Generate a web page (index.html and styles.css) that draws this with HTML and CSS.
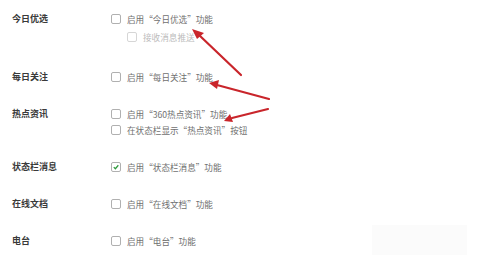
FILE: index.html
```html
<!DOCTYPE html>
<html lang="zh">
<head>
<meta charset="utf-8">
<link rel="stylesheet" href="styles.css">
</head>
<body>
<div class="page">
  <div class="row">
    <div class="label">今日优选</div>
    <div class="opts">
      <div class="opt"><span class="cb"></span><span>启用“今日优选”功能</span></div>
      <div class="opt sub disabled"><span class="cb"></span><span>接收消息推送</span></div>
    </div>
  </div>
  <div class="row">
    <div class="label">每日关注</div>
    <div class="opts">
      <div class="opt"><span class="cb"></span><span>启用“每日关注”功能</span></div>
    </div>
  </div>
  <div class="row">
    <div class="label">热点资讯</div>
    <div class="opts">
      <div class="opt"><span class="cb"></span><span>启用“360热点资讯”功能</span></div>
      <div class="opt"><span class="cb"></span><span>在状态栏显示“热点资讯”按钮</span></div>
    </div>
  </div>
  <div class="row">
    <div class="label">状态栏消息</div>
    <div class="opts">
      <div class="opt"><span class="cb checked"><svg viewBox="0 0 10 10" width="10" height="10"><path d="M2.2 5.2 L4.2 7.2 L7.9 2.8" fill="none" stroke="#2e9a3c" stroke-width="1.5"/></svg></span><span>启用“状态栏消息”功能</span></div>
    </div>
  </div>
  <div class="row">
    <div class="label">在线文档</div>
    <div class="opts">
      <div class="opt"><span class="cb"></span><span>启用“在线文档”功能</span></div>
    </div>
  </div>
  <div class="row">
    <div class="label">电台</div>
    <div class="opts">
      <div class="opt"><span class="cb"></span><span>启用“电台”功能</span></div>
    </div>
  </div>
  <div class="watermark"></div>
  <svg class="arrows" width="479" height="275" viewBox="0 0 479 275">
    <g stroke="#c9252b" stroke-width="2.2" stroke-linecap="round" fill="#c9252b">
      <line x1="241" y1="75" x2="199" y2="35"/>
      <polygon points="192,29 204,33 197,39" stroke="none"/>
      <line x1="269" y1="99" x2="217" y2="85"/>
      <polygon points="209,83 219,80 217,89" stroke="none"/>
      <line x1="268" y1="109" x2="232" y2="118"/>
      <polygon points="224,121 230,114 233,122" stroke="none"/>
    </g>
  </svg>
</div>
</body>
</html>
```
FILE: styles.css
```css
html, body {
  margin: 0;
  padding: 0;
  background: #ffffff;
}
.page {
  position: relative;
  width: 479px;
  height: 275px;
  overflow: hidden;
  padding: 11px 0 0 12px;
  box-sizing: border-box;
  font-family: "Noto Sans CJK SC", "Liberation Sans", sans-serif;
  font-size: 8.6px;
}
.row {
  display: flex;
  margin-bottom: 21px;
}
.row:first-child {
  margin-bottom: 24px;
}
.label {
  width: 99px;
  flex: none;
  line-height: 16px;
  font-weight: bold;
  color: #3a3a3a;
  font-size: 9px;
}
.opts {
  display: flex;
  flex-direction: column;
}
.opt {
  display: flex;
  align-items: center;
  gap: 6px;
  height: 16px;
  color: #707070;
}
.opt.sub {
  margin-left: 16px;
  margin-top: 2px;
}
.opt.disabled {
  color: #bcbcbc;
}
.opt.disabled .cb {
  border-color: #d6d6d6;
}
.cb {
  width: 10px;
  height: 10px;
  box-sizing: border-box;
  border: 1px solid #b0b0b0;
  border-radius: 2px;
  background: #fff;
  flex: none;
  display: flex;
  align-items: center;
  justify-content: center;
}
.cb svg {
  display: block;
}
.watermark {
  position: absolute;
  left: 372px;
  top: 225px;
  width: 95px;
  height: 30px;
  background: #fbfbfb;
}
.arrows {
  position: absolute;
  left: 0;
  top: 0;
}
```
